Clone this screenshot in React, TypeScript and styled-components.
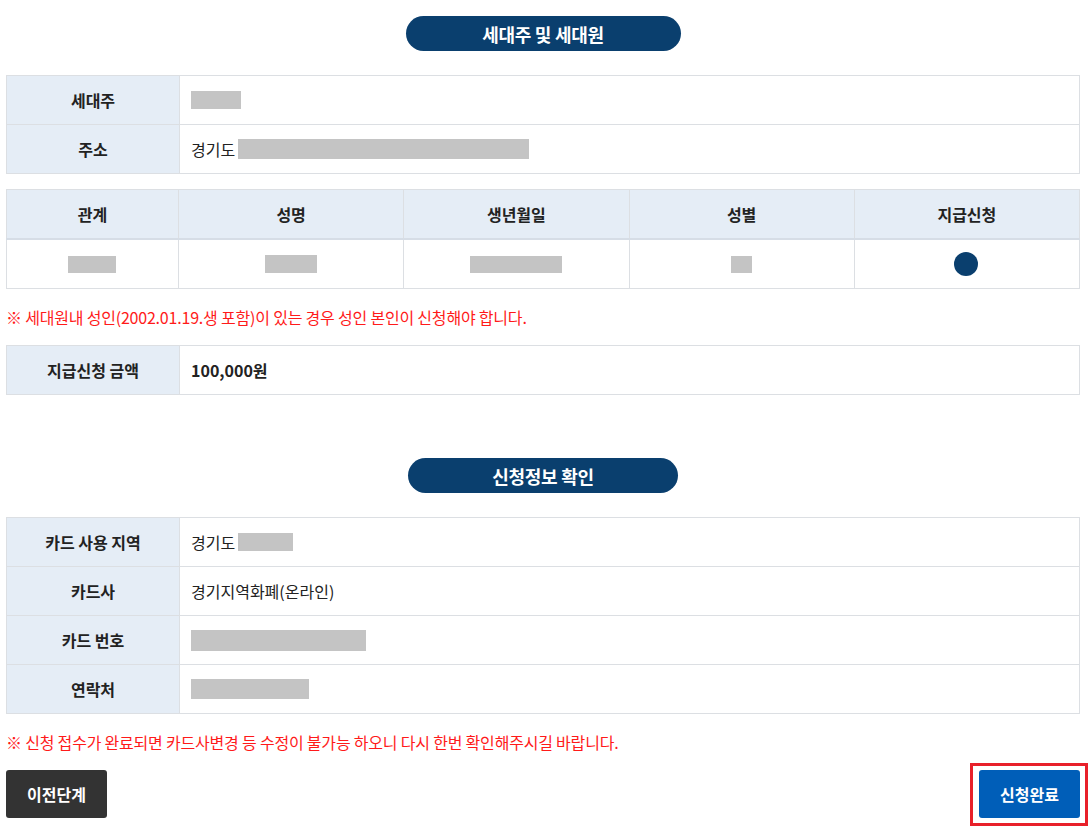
import React from 'react'
import styled, { createGlobalStyle } from 'styled-components'

const GlobalStyle = createGlobalStyle`
  body {
    margin: 0;
    background: #fff;
    font-family: "Noto Sans CJK KR", "Noto Sans", sans-serif;
    color: #222;
  }
`

const Page = styled.div`
  width: 1074px;
  margin-left: 6px;
  padding-top: 16px;
  padding-bottom: 12px;
`

const Section = styled.section<{ $gap?: number }>`
  margin-top: ${p => p.$gap ?? 0}px;
`

const TitleRow = styled.div`
  display: flex;
  justify-content: center;
  margin-bottom: 24px;
`

const TitlePill = styled.h3<{ $w: number }>`
  margin: 0;
  width: ${p => p.$w}px;
  height: 35px;
  border-radius: 18px;
  background: #0a3f6e;
  color: #fff;
  font-size: 18px;
  font-weight: 700;
  display: flex;
  align-items: center;
  justify-content: center;
  letter-spacing: -0.3px;
`

const Table = styled.table<{ $mt?: number }>`
  width: 100%;
  border-collapse: collapse;
  table-layout: fixed;
  margin-top: ${p => p.$mt ?? 0}px;
  font-size: 16px;
`

const Th = styled.th<{ $w?: number }>`
  width: ${p => (p.$w ? `${p.$w}px` : 'auto')};
  height: 48px;
  padding: 0;
  background: #e5edf6;
  border: 1px solid #dcdfe3;
  font-weight: 700;
  color: #222;
  text-align: center;
`

const HeadTh = styled(Th)`
  border-bottom: 2px solid #d6dde6;
`

const Td = styled.td<{ $center?: boolean; $bold?: boolean }>`
  height: 48px;
  padding: 0 12px 0 11px;
  border: 1px solid #dcdfe3;
  text-align: ${p => (p.$center ? 'center' : 'left')};
  font-weight: ${p => (p.$bold ? 700 : 400)};
  color: #222;
  vertical-align: middle;
`

const Cell = styled.div<{ $center?: boolean }>`
  display: flex;
  align-items: center;
  justify-content: ${p => (p.$center ? 'center' : 'flex-start')};
  gap: 3px;
`

const Mask = styled.span<{ $w: number; $h?: number }>`
  display: inline-block;
  width: ${p => p.$w}px;
  height: ${p => p.$h ?? 19}px;
  background: #c4c4c4;
`

const Dot = styled.span`
  display: inline-block;
  width: 24px;
  height: 24px;
  border-radius: 50%;
  background: #0a3f6e;
`

const Note = styled.p`
  margin: 17px 0 17px;
  color: #ff1a1a;
  font-size: 16px;
  line-height: 22px;
  letter-spacing: -0.2px;
`

const Actions = styled.div`
  display: flex;
  justify-content: space-between;
  align-items: center;
`

const Btn = styled.button<{ $tone: 'dark' | 'blue' }>`
  display: block;
  width: 101px;
  height: 48px;
  border: 0;
  border-radius: 3px;
  background: ${p => (p.$tone === 'dark' ? '#333' : '#005eb8')};
  color: #fff;
  font-family: inherit;
  font-size: 16px;
  font-weight: 700;
  cursor: pointer;
`

const Highlight = styled.div`
  position: relative;
  display: flex;
  &::after {
    content: '';
    position: absolute;
    left: -9px;
    top: -7px;
    right: -8px;
    bottom: -8px;
    border: 3px solid #e8202a;
    pointer-events: none;
  }
`

const members = [{ rel: 48, name: 52, birth: 92, sex: 21 }]

const App = () => {
  return (
    <>
      <GlobalStyle />
      <Page>
        <Section>
          <TitleRow>
            <TitlePill $w={275}>세대주 및 세대원</TitlePill>
          </TitleRow>
          <Table>
            <tbody>
              <tr>
                <Th $w={172}>세대주</Th>
                <Td><Cell><Mask $w={50} $h={18} /></Cell></Td>
              </tr>
              <tr>
                <Th $w={172}>주소</Th>
                <Td><Cell>경기도 <Mask $w={291} $h={20} /></Cell></Td>
              </tr>
            </tbody>
          </Table>

          <Table $mt={15}>
            <thead>
              <tr>
                <HeadTh $w={171}>관계</HeadTh>
                <HeadTh>성명</HeadTh>
                <HeadTh>생년월일</HeadTh>
                <HeadTh>성별</HeadTh>
                <HeadTh>지급신청</HeadTh>
              </tr>
            </thead>
            <tbody>
              {members.map((m, i) => (
                <tr key={i}>
                  <Td $center><Cell $center><Mask $w={m.rel} $h={17} /></Cell></Td>
                  <Td $center><Cell $center><Mask $w={m.name} $h={18} /></Cell></Td>
                  <Td $center><Cell $center><Mask $w={m.birth} $h={17} /></Cell></Td>
                  <Td $center><Cell $center><Mask $w={m.sex} $h={17} /></Cell></Td>
                  <Td $center><Cell $center><Dot /></Cell></Td>
                </tr>
              ))}
            </tbody>
          </Table>

          <Note>※ 세대원내 성인(2002.01.19.생 포함)이 있는 경우 성인 본인이 신청해야 합니다.</Note>

          <Table>
            <tbody>
              <tr>
                <Th $w={172}>지급신청 금액</Th>
                <Td $bold>100,000원</Td>
              </tr>
            </tbody>
          </Table>
        </Section>

        <Section $gap={63}>
          <TitleRow>
            <TitlePill $w={270}>신청정보 확인</TitlePill>
          </TitleRow>
          <Table>
            <tbody>
              <tr>
                <Th $w={172}>카드 사용 지역</Th>
                <Td><Cell>경기도 <Mask $w={55} $h={18} /></Cell></Td>
              </tr>
              <tr>
                <Th $w={172}>카드사</Th>
                <Td>경기지역화폐(온라인)</Td>
              </tr>
              <tr>
                <Th $w={172}>카드 번호</Th>
                <Td><Cell><Mask $w={175} $h={21} /></Cell></Td>
              </tr>
              <tr>
                <Th $w={172}>연락처</Th>
                <Td><Cell><Mask $w={118} $h={20} /></Cell></Td>
              </tr>
            </tbody>
          </Table>

          <Note>※ 신청 접수가 완료되면 카드사변경 등 수정이 불가능 하오니 다시 한번 확인해주시길 바랍니다.</Note>

          <Actions>
            <Btn $tone="dark">이전단계</Btn>
            <Highlight>
              <Btn $tone="blue">신청완료</Btn>
            </Highlight>
          </Actions>
        </Section>
      </Page>
    </>
  )
}

export default App
